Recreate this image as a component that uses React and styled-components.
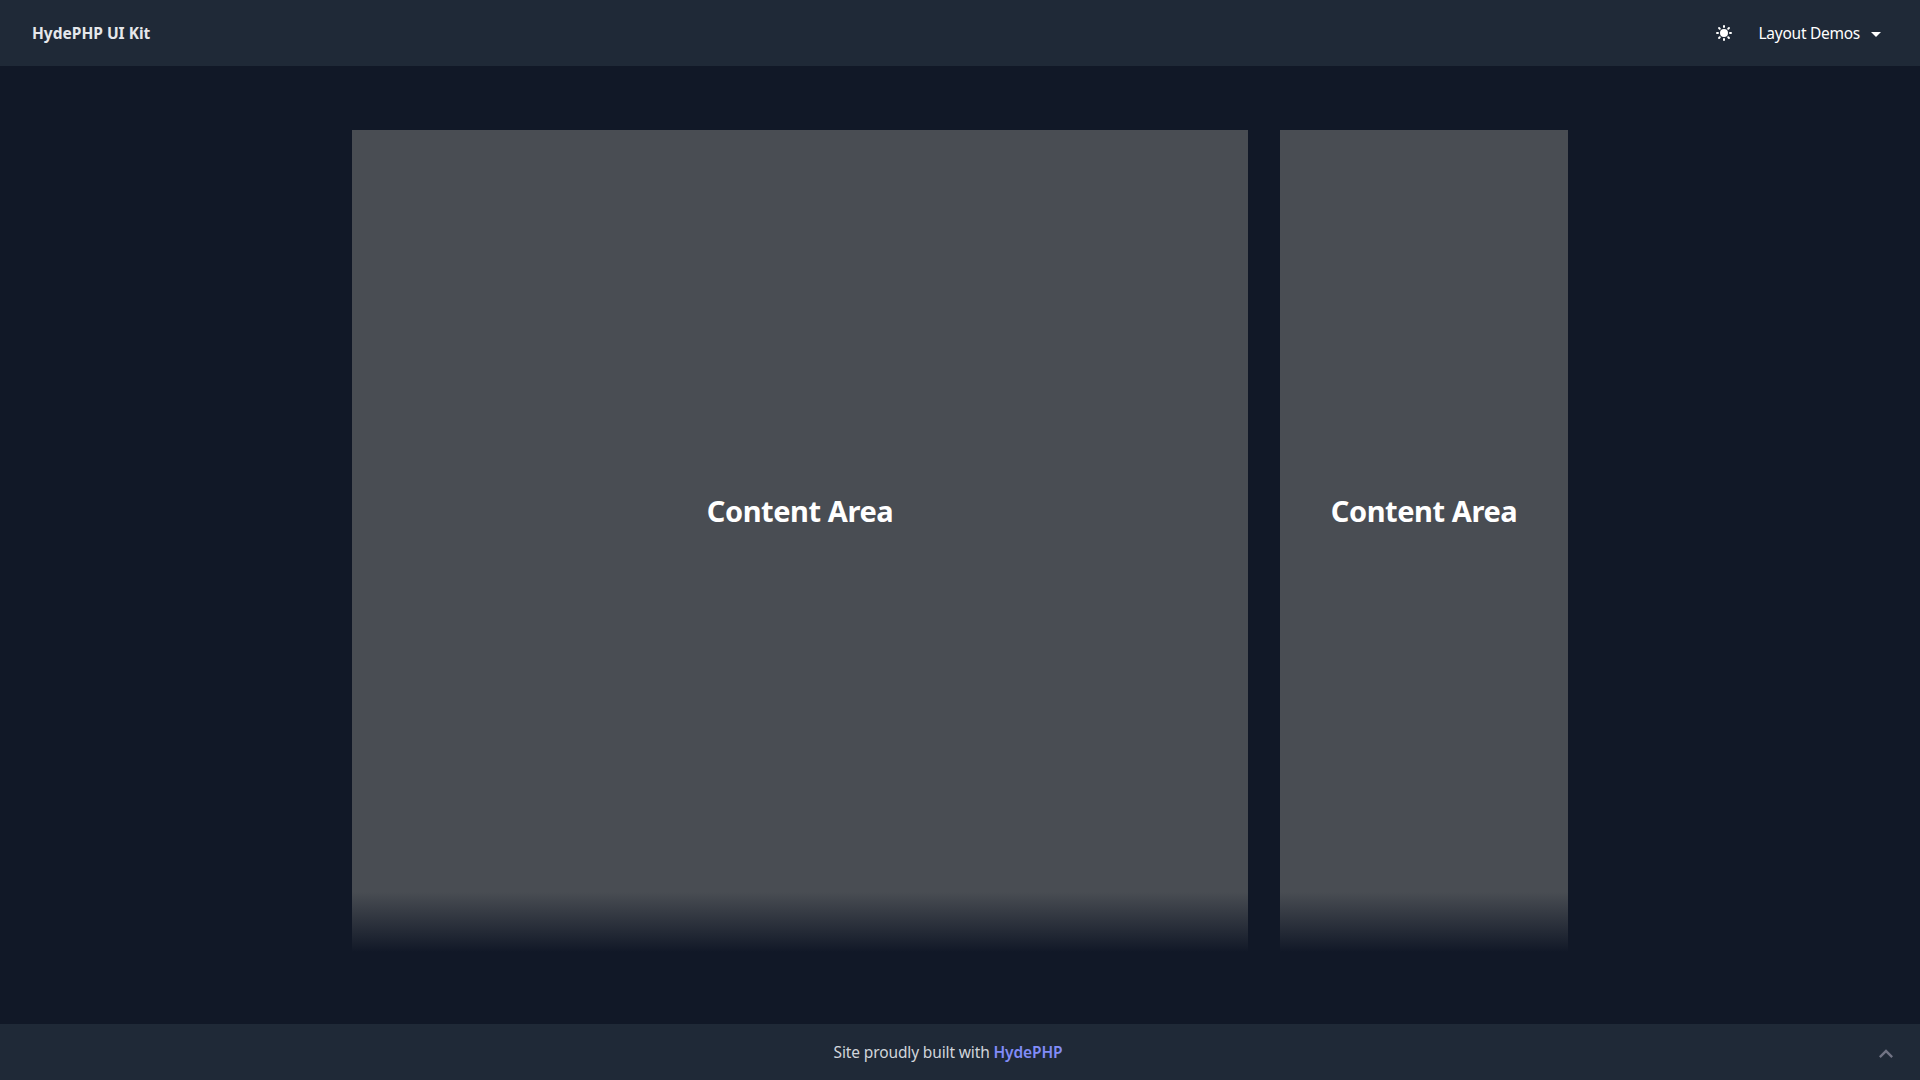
import React from 'react';
import styled, { createGlobalStyle } from 'styled-components';

const GlobalStyle = createGlobalStyle`
  *, *::before, *::after { box-sizing: border-box; }
  body {
    margin: 0;
    background: #111827;
    color: #fff;
    font: 16px/24px 'Segoe UI', 'Noto Sans', sans-serif;
  }
`;

const Page = styled.div`
  display: flex;
  flex-direction: column;
  height: 100vh;
`;

const NavBar = styled.nav`
  display: flex;
  align-items: center;
  justify-content: space-between;
  height: 66px;
  padding: 0 32px;
  background: #1f2937;
`;

const Brand = styled.a`
  color: #e5e7eb;
  font-size: 15.5px;
  font-weight: 700;
  letter-spacing: 0;
`;

const NavActions = styled.div`
  display: flex;
  align-items: center;
`;

const IconButton = styled.button`
  display: flex;
  margin: 0 24.5px 0 0;
  padding: 0;
  border: 0;
  background: none;
  color: #fff;
`;

const Dropdown = styled.button`
  display: flex;
  align-items: center;
  padding: 0;
  border: 0;
  background: none;
  color: #fff;
  font: inherit;
  font-size: 15.5px;
  letter-spacing: -0.26px;
`;

const DropdownLabel = styled.span`
  width: 105.5px;
  padding-bottom: 1px;
  text-align: left;
  white-space: nowrap;
`;

const Icon = styled.svg`
  display: block;
  width: ${({ $size }) => $size}px;
  height: ${({ $size }) => $size}px;
  fill: currentColor;
`;

const Caret = styled(Icon)`
  margin-top: 2px;
`;

const Main = styled.main`
  display: flex;
  flex: 1;
  gap: 32px;
  width: 1216px;
  margin: 0 auto;
  padding: 64px 0 72px;
`;

const Panel = styled.section`
  display: flex;
  align-items: center;
  justify-content: center;
  flex: ${({ $width }) => `0 0 ${$width}px`};
  padding-bottom: 60px;
  background: linear-gradient(to top, rgba(73, 77, 83, 0), #494d53 60px);
`;

const PanelTitle = styled.h2`
  margin: 0;
  font-size: 29px;
  line-height: 36px;
  font-weight: 700;
  letter-spacing: -0.43px;
  white-space: nowrap;
`;

const Footer = styled.footer`
  display: grid;
  grid-template-columns: 48px 1fr 48px;
  align-items: center;
  height: 56px;
  padding: 0 20px 0 0;
  background: #1f2937;
`;

const Credit = styled.p`
  margin: 0;
  grid-column: 2;
  padding-right: 4px;
  color: #d1d5db;
  font-size: 15.5px;
  letter-spacing: -0.13px;
  text-align: center;
`;

const CreditLink = styled.a`
  color: #818cf8;
  font-weight: 600;
`;

const BackToTop = styled.a`
  display: flex;
  justify-content: flex-end;
  margin-top: 3px;
  color: #717384;
`;

export default function App() {
  return (
    <Page>
      <GlobalStyle />
      <NavBar>
        <Brand>HydePHP UI Kit</Brand>
        <NavActions>
          <IconButton aria-label="Toggle theme">
            <Icon $size={20} viewBox="0 0 20 20">
              <path
                fillRule="evenodd"
                clipRule="evenodd"
                d="M10 2a1 1 0 011 1v1a1 1 0 11-2 0V3a1 1 0 011-1zm4 8a4 4 0 11-8 0 4 4 0 018 0zm-.464 4.95l.707.707a1 1 0 001.414-1.414l-.707-.707a1 1 0 00-1.414 1.414zm2.12-10.607a1 1 0 010 1.414l-.706.707a1 1 0 11-1.414-1.414l.707-.707a1 1 0 011.414 0zM17 11a1 1 0 100-2h-1a1 1 0 100 2h1zm-7 4a1 1 0 011 1v1a1 1 0 11-2 0v-1a1 1 0 011-1zM5.05 6.464A1 1 0 106.465 5.05l-.708-.707a1 1 0 00-1.414 1.414l.707.707zm1.414 8.486l-.707.707a1 1 0 01-1.414-1.414l.707-.707a1 1 0 011.414 1.414zM4 11a1 1 0 100-2H3a1 1 0 000 2h1z"
              />
            </Icon>
          </IconButton>
          <Dropdown>
            <DropdownLabel>Layout Demos</DropdownLabel>
            <Caret $size={24} viewBox="0 0 24 24">
              <path d="M7 10l5 5 5-5z" />
            </Caret>
          </Dropdown>
        </NavActions>
      </NavBar>
      <Main>
        <Panel $width={896}>
          <PanelTitle>Content Area</PanelTitle>
        </Panel>
        <Panel $width={288}>
          <PanelTitle>Content Area</PanelTitle>
        </Panel>
      </Main>
      <Footer>
        <Credit>
          Site proudly built with <CreditLink>HydePHP</CreditLink>
        </Credit>
        <BackToTop aria-label="Go to top of page">
          <Icon $size={28} viewBox="0 0 24 24">
            <path d="M7.41 15.41L12 10.83l4.59 4.58L18 14l-6-6-6 6z" />
          </Icon>
        </BackToTop>
      </Footer>
    </Page>
  );
}
